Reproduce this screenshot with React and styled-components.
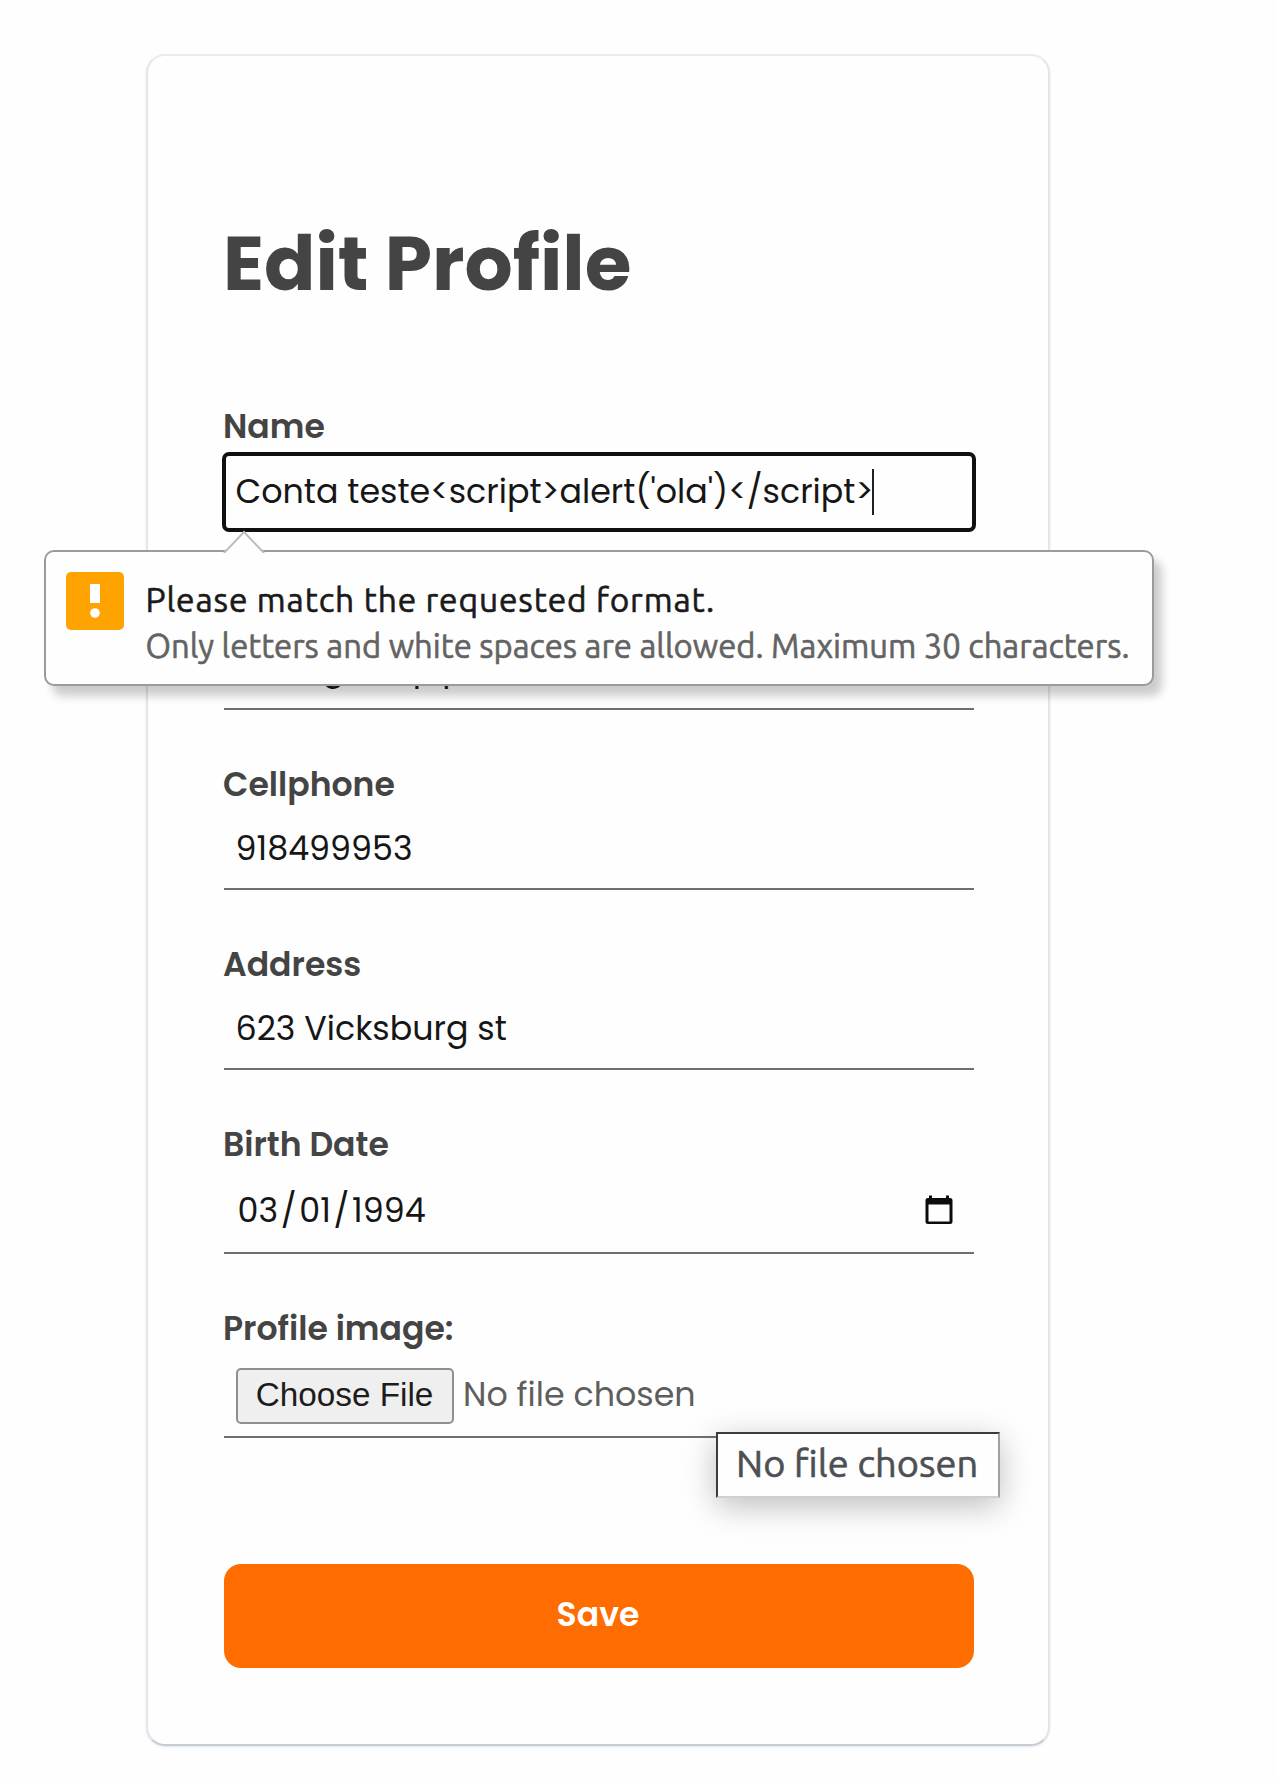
import React from "react";
import styled, { createGlobalStyle } from "styled-components";

const GlobalStyle = createGlobalStyle`
  * { box-sizing: border-box; }
  body { margin: 0; background: #fefefe; }
`;

const Page = styled.main`
  width: 1276px;
  height: 1782px;
  padding: 54px 0 0 146px;
  overflow: hidden;
  background: #fefefe;
  font-family: Poppins, Inter, sans-serif;
  font-feature-settings: "cv11";
  color: #444;
`;

const Card = styled.form`
  width: 904px;
  height: 1692px;
  padding: 162px 74px 0 76px;
  background: #fefefe;
  border: 2px solid #e3e5eb;
  border-top-color: #eaecf0;
  border-bottom-color: #c6ccd3;
  border-radius: 19px;
  box-shadow: 0 1px 2px rgba(200, 205, 215, 0.45);
`;

const Title = styled.h1`
  margin: 0 0 95px;
  font-size: 75.8px;
  font-weight: 700;
  line-height: 91px;
  text-indent: -1px;
  white-space: nowrap;
`;

const Field = styled.div`
  position: relative;
  margin-bottom: ${(p) => p.$gap ?? 52}px;
`;

const Label = styled.label`
  display: block;
  height: 48px;
  margin-left: -1px;
  font-size: 33.1px;
  font-weight: 600;
  line-height: 46px;
  white-space: nowrap;
`;

const Control = styled.div`
  display: flex;
  align-items: center;
  width: 750px;
  height: ${(p) => (p.$tall ? 84 : 80)}px;
  padding: 0 21px 0 11.5px;
  border-bottom: 2px solid #6f6f6f;
  color: #161616;
  font-size: 33.3px;
  line-height: 40px;
  white-space: nowrap;
`;

const FocusedControl = styled(Control)`
  width: 754px;
  margin-left: -2px;
  padding: 0 0 1px 9.5px;
  border: 4px solid #101010;
  border-radius: 7px;
`;

const Caret = styled.i`
  width: 2px;
  height: 46px;
  margin-left: -1px;
  background: #222;
`;

const DateParts = styled.span`
  display: flex;
  gap: 2.7px;
  padding-left: 2px;
`;

const CalendarIcon = styled.svg`
  width: 28px;
  height: 30px;
  margin: 0 0 2px auto;
`;

const FileButton = styled.button`
  width: 218px;
  height: 56px;
  margin: 2px 9px 0 0.5px;
  padding: 0 1px 3px 0;
  flex: none;
  background: #efefef;
  border: 2px solid #8f8f8f;
  border-radius: 5px;
  color: #1c1c1c;
  font: 33.3px "Liberation Sans", Arial, sans-serif;
`;

const FileStatus = styled.span`
  color: #5e5e5e;
`;

const SaveButton = styled.button`
  display: block;
  width: 750px;
  height: 104px;
  margin-top: 126px;
  padding: 0 2px 2px 0;
  border: 0;
  border-radius: 17px;
  background: #ff6c00;
  color: #fff;
  font: 600 33.1px Poppins, Inter, sans-serif;
  font-feature-settings: "cv11";
`;

const Bubble = styled.div`
  position: absolute;
  z-index: 2;
  top: 146px;
  left: -180px;
  display: flex;
  gap: 21.5px;
  width: 1110px;
  height: 136px;
  padding: 20px 0 0 20px;
  background: #fefefe;
  border: 2px solid #9b9b9b;
  border-radius: 10px;
  box-shadow: 8px 10px 10px rgba(0, 0, 0, 0.2);
`;

const Pointer = styled.svg`
  position: absolute;
  top: -22px;
  left: 177px;
  width: 42px;
  height: 23px;
`;

const WarningIcon = styled.svg`
  flex: none;
  width: 58px;
  height: 58px;
`;

const Messages = styled.div`
  padding-top: 5px;
  font-family: Ubuntu, "Noto Sans", sans-serif;
  line-height: 46px;
  white-space: nowrap;
  -webkit-text-stroke: 0.6px;
`;

const Message = styled.div`
  color: #1a1a1a;
  font-size: 33.5px;
  letter-spacing: 0.87px;
`;

const Hint = styled.div`
  color: #636363;
  font-size: 32.82px;
`;

const Tooltip = styled.div`
  position: absolute;
  top: 126px;
  left: 492px;
  width: 284px;
  height: 66px;
  padding: 4px 0 0 18px;
  background: #fefefe;
  border: 2px solid;
  border-color: #3c3c3c #a0a0a0 #cfcfcf #3c3c3c;
  box-shadow: 0 8px 32px rgba(0, 0, 0, 0.26);
  color: #4d4f52;
  font: 38px/51px Ubuntu, "Noto Sans", sans-serif;
  white-space: nowrap;
  -webkit-text-stroke: 0.6px;
`;

export default function App() {
  return (
    <Page>
      <GlobalStyle />
      <Card>
        <Title>Edit Profile</Title>
        <Field $gap={50}>
          <Label>Name</Label>
          <FocusedControl>
            {"Conta teste<script>alert('ola')</script>"}
            <Caret />
          </FocusedControl>
          <Bubble role="alert">
            <Pointer viewBox="0 0 42 23">
              <path d="M1 23 21 2l20 21" fill="#fefefe" stroke="#bdbdbd" strokeWidth="2" />
            </Pointer>
            <WarningIcon viewBox="0 0 58 58">
              <rect width="58" height="58" rx="5" fill="#ffa300" />
              <rect x="24" y="12" width="10" height="19" fill="#fff" />
              <circle cx="29" cy="41" r="4.8" fill="#fff" />
            </WarningIcon>
            <Messages>
              <Message>Please match the requested format.</Message>
              <Hint>Only letters and white spaces are allowed. Maximum 30 characters.</Hint>
            </Messages>
          </Bubble>
        </Field>
        <Field>
          <Label>Email</Label>
          <Control>marsgmrup.pt</Control>
        </Field>
        <Field>
          <Label>Cellphone</Label>
          <Control>918499953</Control>
        </Field>
        <Field>
          <Label>Address</Label>
          <Control>623 Vicksburg st</Control>
        </Field>
        <Field>
          <Label>Birth Date</Label>
          <Control $tall>
            <DateParts>
              <span>03</span>
              <span>/</span>
              <span>01</span>
              <span>/</span>
              <span>1994</span>
            </DateParts>
            <CalendarIcon viewBox="0 0 28 30">
              <path
                d="M4 0.5h3V3h14V0.5h3V3h1a2.5 2.5 0 0 1 2.5 2.5v21A2.5 2.5 0 0 1 25 29H3a2.5 2.5 0 0 1-2.5-2.5v-21A2.5 2.5 0 0 1 3 3h1zM3.5 9.5v17h21v-17z"
                fill="#0c0c0c"
                fillRule="evenodd"
              />
            </CalendarIcon>
          </Control>
        </Field>
        <Field>
          <Label>Profile image:</Label>
          <Control $tall>
            <FileButton type="button">Choose File</FileButton>
            <FileStatus>No file chosen</FileStatus>
          </Control>
          <Tooltip role="tooltip">No file chosen</Tooltip>
        </Field>
        <SaveButton type="button">Save</SaveButton>
      </Card>
    </Page>
  );
}
